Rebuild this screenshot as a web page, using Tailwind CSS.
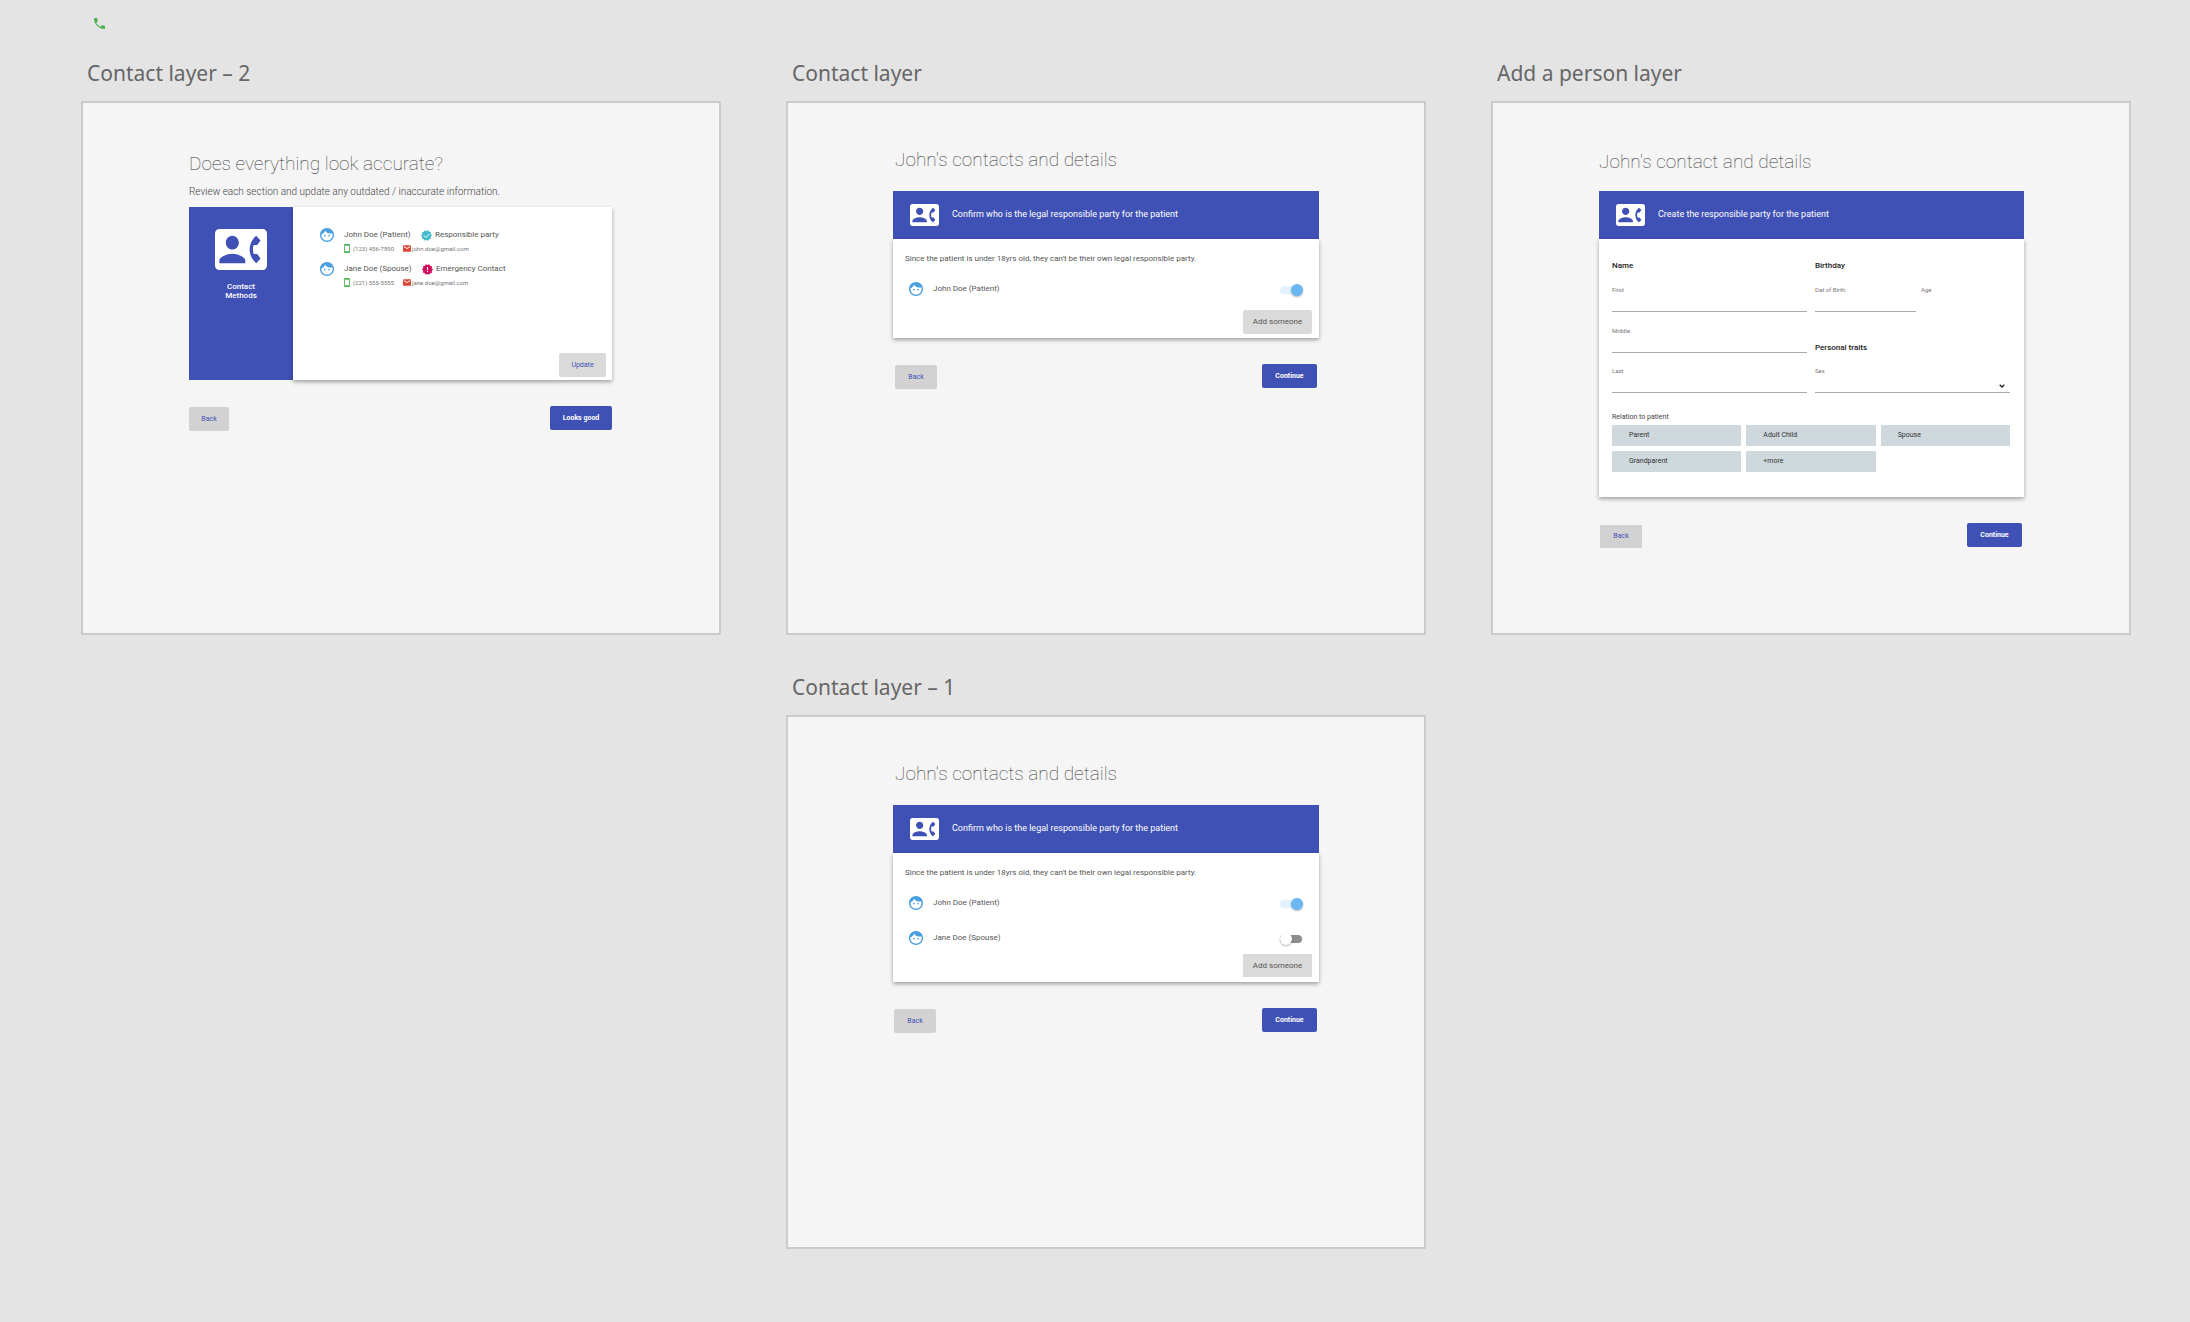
<!DOCTYPE html>
<html lang="en">
<head>
    <meta charset="UTF-8">
    <title>Contact layers</title>
    <script src="https://cdn.jsdelivr.net/npm/@tailwindcss/browser@4"></script>
</head>
<body class="bg-[#e4e4e4] min-h-screen font-['Roboto',sans-serif] text-[#555]">

<!-- shared icons -->
<svg class="hidden" aria-hidden="true">
    <symbol id="contact-phone" viewBox="0 3 24 18" preserveAspectRatio="none">
        <path d="M22 3H2C.9 3 0 3.9 0 5v14c0 1.1.9 2 2 2h20c1.1 0 1.99-.9 1.99-2L24 5c0-1.1-.9-2-2-2zM8 6c1.66 0 3 1.34 3 3s-1.34 3-3 3-3-1.34-3-3 1.34-3 3-3zm6 12H2v-1c0-2 4-3.1 6-3.1s6 1.1 6 3.1v1zm3.85-4h1.64L21 16l-1.99 1.99c-1.31-.98-2.28-2.38-2.73-3.99-.18-.64-.28-1.31-.28-2s.1-1.36.28-2c.45-1.62 1.42-3.01 2.73-3.99L21 8l-1.51 2h-1.64c-.22.63-.35 1.3-.35 2s.13 1.37.35 2z"/>
    </symbol>
    <symbol id="face" viewBox="2 2 20 20">
        <path d="M9 11.75c-.69 0-1.25.56-1.25 1.25s.56 1.25 1.25 1.25 1.25-.56 1.25-1.25-.56-1.25-1.25-1.25zm6 0c-.69 0-1.25.56-1.25 1.25s.56 1.25 1.25 1.25 1.25-.56 1.25-1.25-.56-1.25-1.25-1.25zM12 2C6.48 2 2 6.48 2 12s4.48 10 10 10 10-4.48 10-10S17.52 2 12 2zm0 18c-4.41 0-8-3.59-8-8 0-.29.02-.58.05-.86 2.36-1.05 4.23-2.98 5.21-5.37C11.07 8.33 14.05 10 17.42 10c.78 0 1.53-.09 2.25-.26.21.71.33 1.47.33 2.26 0 4.41-3.59 8-8 8z"/>
    </symbol>
    <symbol id="smartphone" viewBox="5 1 14 22">
        <path d="M17 1.01L7 1c-1.1 0-2 .9-2 2v18c0 1.1.9 2 2 2h10c1.1 0 2-.9 2-2V3c0-1.1-.9-1.99-2-1.99zM17 19H7V5h10v14z"/>
    </symbol>
    <symbol id="mail" viewBox="2 4 20 16">
        <path d="M20 4H4c-1.1 0-1.99.9-1.99 2L2 18c0 1.1.9 2 2 2h16c1.1 0 2-.9 2-2V6c0-1.1-.9-2-2-2zm0 4l-8 5-8-5V6l8 5 8-5v2z"/>
    </symbol>
    <symbol id="badge" viewBox="1 1 22 22">
        <path d="M23 12l-2.44-2.78.34-3.68-3.61-.82-1.89-3.18L12 3 8.6 1.54 6.71 4.72l-3.61.81.34 3.68L1 12l2.44 2.78-.34 3.69 3.61.82 1.89 3.18L12 21l3.4 1.46 1.89-3.18 3.61-.82-.34-3.68L23 12z"/>
    </symbol>
</svg>

<main class="pl-[81px] pr-[59px] pt-[18px] pb-[72px]">
    <svg class="ml-[13px] size-[11px] fill-[#4caf50]" viewBox="3 3 18 18"><path d="M6.62 10.79c1.44 2.83 3.76 5.14 6.59 6.59l2.2-2.2c.27-.27.67-.36 1.02-.24 1.12.37 2.33.57 3.57.57.55 0 1 .45 1 1V20c0 .55-.45 1-1 1-9.39 0-17-7.61-17-17 0-.55.45-1 1-1h3.5c.55 0 1 .45 1 1 0 1.25.2 2.45.57 3.57.11.35.03.74-.25 1.02l-2.2 2.2z"/></svg>

    <div class="mt-7 grid grid-cols-3 gap-x-[65px] gap-y-9">

        <!-- Contact layer 2 -->
        <section>
            <h2 class="mb-3 ml-[6px] text-[21px] leading-8 text-[#666] font-['Noto_Sans',sans-serif]">Contact layer – 2</h2>
            <div class="aspect-[640/534] border-2 border-[#cbcbcb] bg-[#f5f5f5] pr-[107px] pl-[106px] pt-[49px]">
                <h1 class="text-[19px] leading-6 font-thin text-[#333]">Does everything look accurate?</h1>
                <p class="mt-2 mb-[7px] text-[10px] leading-4 font-light text-[#444]">Review each section and update any outdated / inaccurate information.</p>
                <div class="flex h-[173px]">
                    <div class="flex w-[104px] flex-col items-center bg-[#3f51b5] pt-[22px] text-center text-white">
                        <svg class="h-[41px] w-[52px] fill-white"><use href="#contact-phone"/></svg>
                        <p class="mt-3 text-[8px] leading-[9px] font-medium">Contact<br>Methods</p>
                    </div>
                    <div class="flex flex-1 flex-col bg-white pt-5 pr-[6px] pb-[3px] pl-[27px] shadow-[0_2px_4px_rgba(0,0,0,0.35)]">
                        <div class="flex gap-[10px]">
                            <svg class="mt-px size-[14px] fill-[#4a9fe0]"><use href="#face"/></svg>
                            <div>
                                <div class="flex h-4 items-center text-[8px]">
                                    <span class="w-[77px]">John Doe (Patient)</span>
                                    <svg class="mr-[3px] size-[11px] fill-[#45bccd]"><use href="#badge"/><path class="fill-none stroke-white stroke-1" d="M3 5.5l2 2 3.500-3.500"/></svg>
                                    <span>Responsible party</span>
                                </div>
                                <div class="flex h-[10px] items-center text-[6px] text-[#777]">
                                    <svg class="mr-[3px] h-[9px] w-[6px] fill-[#4caf50]"><use href="#smartphone"/></svg>
                                    <span class="w-[50px]">(123) 456-7890</span>
                                    <svg class="mr-px h-[7px] w-2 fill-[#db4437]"><use href="#mail"/></svg>
                                    <span>john.doe@gmail.com</span>
                                </div>
                            </div>
                        </div>
                        <div class="mt-2 flex gap-[10px]">
                            <svg class="mt-px size-[14px] fill-[#4a9fe0]"><use href="#face"/></svg>
                            <div>
                                <div class="flex h-4 items-center text-[8px]">
                                    <span class="w-[78px]">Jane Doe (Spouse)</span>
                                    <svg class="mr-[3px] size-[11px] fill-[#d0105e]"><use href="#badge"/><path class="fill-white" d="M5 3h1v3h-1zM5 7h1v1h-1z"/></svg>
                                    <span>Emergency Contact</span>
                                </div>
                                <div class="flex h-[10px] items-center text-[6px] text-[#777]">
                                    <svg class="mr-[3px] h-[9px] w-[6px] fill-[#4caf50]"><use href="#smartphone"/></svg>
                                    <span class="w-[50px]">(221) 555-5555</span>
                                    <svg class="mr-px h-[7px] w-2 fill-[#db4437]"><use href="#mail"/></svg>
                                    <span>jane.doe@gmail.com</span>
                                </div>
                            </div>
                        </div>
                        <button type="button" class="mt-auto ml-auto h-6 w-[47px] rounded-[2px] bg-[#dadada] text-[7px] text-[#3f51b5]">Update</button>
                    </div>
                </div>
                <div class="mt-[26px] flex justify-between">
                    <button type="button" class="mt-px h-6 w-10 rounded-[2px] bg-[#d2d2d2] text-[7px] text-[#3f51b5]">Back</button>
                    <button type="button" class="h-6 w-[62px] rounded-[2px] bg-[#3f51b5] text-[7px] font-bold text-white">Looks good</button>
                </div>
            </div>
        </section>

        <!-- Contact layer -->
        <section>
            <h2 class="mb-3 ml-[6px] text-[21px] leading-8 text-[#666] font-['Noto_Sans',sans-serif]">Contact layer</h2>
            <div class="aspect-[640/534] border-2 border-[#cbcbcb] bg-[#f5f5f5] px-[105px] pt-[45px]">
                <h1 class="mb-[19px] pl-[2px] text-[19px] leading-6 font-thin text-[#333]">John's contacts and details</h1>
                <div class="flex h-12 items-center bg-[#3f51b5] pl-[17px] text-white">
                    <svg class="mr-[13px] h-[22px] w-[29px] fill-white"><use href="#contact-phone"/></svg>
                    <p class="text-[9px]">Confirm who is the legal responsible party for the patient</p>
                </div>
                <div class="bg-white pt-3 pb-1 shadow-[0_2px_4px_rgba(0,0,0,0.35)]">
                    <p class="pl-3 text-[8px] leading-4">Since the patient is under 18yrs old, they can't be their own legal responsible party.</p>
                    <div class="mt-[13px] flex h-[18px] items-center pr-[17px] pl-4">
                        <svg class="mr-[10px] size-[14px] fill-[#4a9fe0]"><use href="#face"/></svg>
                        <label for="john-a" class="flex-1 text-[8px]">John Doe (Patient)</label>
                        <input type="checkbox" role="switch" id="john-a" checked class="relative mt-[2px] h-2 w-[22px] appearance-none rounded-full bg-[#8c8c8c] before:absolute before:-top-[2px] before:left-0 before:size-3 before:rounded-full before:bg-white before:shadow-[0_1px_2px_rgba(0,0,0,0.3)] checked:bg-[#e3f2fd] checked:before:left-[11px] checked:before:bg-[#6ab7f2]">
                    </div>
                    <div class="mt-3 flex justify-end pr-[7px]">
                        <button type="button" class="h-6 w-[69px] rounded-[2px] bg-[#dadada] text-[8px]">Add someone</button>
                    </div>
                </div>
                <div class="mt-[26px] flex justify-between px-[2px]">
                    <button type="button" class="mt-px h-6 w-[42px] rounded-[2px] bg-[#d2d2d2] text-[7px] text-[#3f51b5]">Back</button>
                    <button type="button" class="h-6 w-[55px] rounded-[2px] bg-[#3f51b5] text-[7px] font-bold text-white">Continue</button>
                </div>
            </div>
        </section>

        <!-- Add a person layer -->
        <section>
            <h2 class="mb-3 ml-[6px] text-[21px] leading-8 text-[#666] font-['Noto_Sans',sans-serif]">Add a person layer</h2>
            <div class="aspect-[640/534] border-2 border-[#cbcbcb] bg-[#f5f5f5] pr-[105px] pl-[106px] pt-[47px]">
                <h1 class="mb-[17px] text-[19px] leading-6 font-thin text-[#333]">John's contact and details</h1>
                <div class="flex h-12 items-center bg-[#3f51b5] pl-[17px] text-white">
                    <svg class="mr-[13px] h-[22px] w-[29px] fill-white"><use href="#contact-phone"/></svg>
                    <p class="text-[9px]">Create the responsible party for the patient</p>
                </div>
                <form class="bg-white pt-[19px] pr-[14px] pb-[25px] pl-[13px] shadow-[0_2px_4px_rgba(0,0,0,0.35)]">
                    <div class="grid grid-cols-2 gap-x-2">
                        <div>
                            <h3 class="text-[8px] leading-4 font-medium text-[#222]">Name</h3>
                            <div class="mt-3 flex h-[26px] flex-col">
                                <label for="first" class="text-[6px] leading-2 text-[#777]">First</label>
                                <input type="text" id="first" class="w-full flex-1 border-b border-[#aaa] text-[8px] outline-none">
                            </div>
                            <div class="mt-[15px] flex h-[26px] flex-col">
                                <label for="middle" class="text-[6px] leading-2 text-[#777]">Middle</label>
                                <input type="text" id="middle" class="w-full flex-1 border-b border-[#aaa] text-[8px] outline-none">
                            </div>
                            <div class="mt-[14px] flex h-[26px] flex-col">
                                <label for="last" class="text-[6px] leading-2 text-[#777]">Last</label>
                                <input type="text" id="last" class="w-full flex-1 border-b border-[#aaa] text-[8px] outline-none">
                            </div>
                        </div>
                        <div>
                            <h3 class="text-[8px] leading-4 font-medium text-[#222]">Birthday</h3>
                            <div class="mt-3 flex h-[26px] gap-[5px]">
                                <div class="flex w-[101px] flex-col">
                                    <label for="dob" class="text-[6px] leading-2 text-[#777]">Dat of Birth</label>
                                    <input type="text" id="dob" class="w-full flex-1 border-b border-[#aaa] text-[8px] outline-none">
                                </div>
                                <span class="text-[6px] leading-2 text-[#777]">Age</span>
                            </div>
                            <h3 class="mt-7 text-[8px] leading-4 font-medium text-[#222]">Personal traits</h3>
                            <div class="relative mt-[11px] flex h-[26px] flex-col">
                                <label for="sex" class="text-[6px] leading-2 text-[#777]">Sex</label>
                                <select id="sex" class="w-full flex-1 appearance-none border-b border-[#aaa] text-[8px] outline-none"><option></option></select>
                                <svg class="pointer-events-none absolute right-[5px] bottom-[5px] h-1 w-[6px] fill-none stroke-[#222]" viewBox="0 0 6 4"><path stroke-width="1.300" d="M.7.7L3 3 5.300.7"/></svg>
                            </div>
                        </div>
                    </div>
                    <fieldset class="mt-4">
                        <legend class="text-[7px] leading-4 text-[#444]">Relation to patient</legend>
                        <div class="grid grid-cols-3 gap-[5px] text-[7px] text-[#333]">
                            <button type="button" class="h-[21px] bg-[#ced8dd] pl-[17px] text-left">Parent</button>
                            <button type="button" class="h-[21px] bg-[#ced8dd] pl-[17px] text-left">Adult Child</button>
                            <button type="button" class="h-[21px] bg-[#ced8dd] pl-[17px] text-left">Spouse</button>
                            <button type="button" class="h-[21px] bg-[#ced8dd] pl-[17px] text-left">Grandparent</button>
                            <button type="button" class="h-[21px] bg-[#ced8dd] pl-[17px] text-left">+more</button>
                        </div>
                    </fieldset>
                </form>
                <div class="mt-[26px] flex justify-between pr-[2px] pl-px">
                    <button type="button" class="mt-[2px] h-[23px] w-[42px] bg-[#d2d2d2] text-[7px] text-[#3f51b5]">Back</button>
                    <button type="button" class="h-6 w-[55px] rounded-[2px] bg-[#3f51b5] text-[7px] font-bold text-white">Continue</button>
                </div>
            </div>
        </section>

        <!-- Contact layer 1 -->
        <section class="col-start-2">
            <h2 class="mb-3 ml-[6px] text-[21px] leading-8 text-[#666] font-['Noto_Sans',sans-serif]">Contact layer – 1</h2>
            <div class="aspect-[640/534] border-2 border-[#cbcbcb] bg-[#f5f5f5] px-[105px] pt-[45px]">
                <h1 class="mb-[19px] pl-[2px] text-[19px] leading-6 font-thin text-[#333]">John's contacts and details</h1>
                <div class="flex h-12 items-center bg-[#3f51b5] pl-[17px] text-white">
                    <svg class="mr-[13px] h-[22px] w-[29px] fill-white"><use href="#contact-phone"/></svg>
                    <p class="text-[9px]">Confirm who is the legal responsible party for the patient</p>
                </div>
                <div class="bg-white pt-3 pb-[5px] shadow-[0_2px_4px_rgba(0,0,0,0.35)]">
                    <p class="pl-3 text-[8px] leading-4">Since the patient is under 18yrs old, they can't be their own legal responsible party.</p>
                    <div class="mt-[13px] flex h-[18px] items-center pr-[17px] pl-4">
                        <svg class="mr-[10px] size-[14px] fill-[#4a9fe0]"><use href="#face"/></svg>
                        <label for="john-b" class="flex-1 text-[8px]">John Doe (Patient)</label>
                        <input type="checkbox" role="switch" id="john-b" checked class="relative mt-[2px] h-2 w-[22px] appearance-none rounded-full bg-[#8c8c8c] before:absolute before:-top-[2px] before:left-0 before:size-3 before:rounded-full before:bg-white before:shadow-[0_1px_2px_rgba(0,0,0,0.3)] checked:bg-[#e3f2fd] checked:before:left-[11px] checked:before:bg-[#6ab7f2]">
                    </div>
                    <div class="mt-[17px] flex h-[18px] items-center pr-[17px] pl-4">
                        <svg class="mr-[10px] size-[14px] fill-[#4a9fe0]"><use href="#face"/></svg>
                        <label for="jane-b" class="flex-1 text-[8px]">Jane Doe (Spouse)</label>
                        <input type="checkbox" role="switch" id="jane-b" class="relative mt-[2px] h-2 w-[22px] appearance-none rounded-full bg-[#8c8c8c] before:absolute before:-top-[2px] before:left-0 before:size-3 before:rounded-full before:bg-white before:shadow-[0_1px_2px_rgba(0,0,0,0.3)] checked:bg-[#e3f2fd] checked:before:left-[11px] checked:before:bg-[#6ab7f2]">
                    </div>
                    <div class="mt-[7px] flex justify-end pr-[7px]">
                        <button type="button" class="h-[23px] w-[69px] bg-[#dadada] text-[8px]">Add someone</button>
                    </div>
                </div>
                <div class="mt-[26px] flex justify-between pr-[2px] pl-px">
                    <button type="button" class="mt-px h-6 w-[42px] rounded-[2px] bg-[#d2d2d2] text-[7px] text-[#3f51b5]">Back</button>
                    <button type="button" class="h-6 w-[55px] rounded-[2px] bg-[#3f51b5] text-[7px] font-bold text-white">Continue</button>
                </div>
            </div>
        </section>

    </div>
</main>

</body>
</html>
